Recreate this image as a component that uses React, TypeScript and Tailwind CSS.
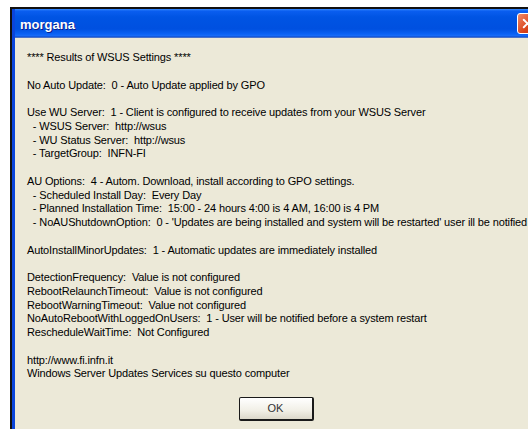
import { X } from "lucide-react";

const lines = [
  "**** Results of WSUS Settings ****",
  "",
  "No Auto Update:  0 - Auto Update applied by GPO",
  "",
  "Use WU Server:  1 - Client is configured to receive updates from your WSUS Server",
  "  - WSUS Server:  http://wsus",
  "  - WU Status Server:  http://wsus",
  "  - TargetGroup:  INFN-FI",
  "",
  "AU Options:  4 - Autom. Download, install according to GPO settings.",
  "  - Scheduled Install Day:  Every Day",
  "  - Planned Installation Time:  15:00 - 24 hours 4:00 is 4 AM, 16:00 is 4 PM",
  "  - NoAUShutdownOption:  0 - 'Updates are being installed and system will be restarted' user ill be notified",
  "",
  "AutoInstallMinorUpdates:  1 - Automatic updates are immediately installed",
  "",
  "DetectionFrequency:  Value is not configured",
  "RebootRelaunchTimeout:  Value is not configured",
  "RebootWarningTimeout:  Value not configured",
  "NoAutoRebootWithLoggedOnUsers:  1 - User will be notified before a system restart",
  "RescheduleWaitTime:  Not Configured",
  "",
  "http://www.fi.infn.it",
  "Windows Server Updates Services su questo computer",
];

function TitleBar() {
  return (
    <div className="flex h-[28px] items-center justify-between bg-[linear-gradient(to_bottom,#3a8cff_0px,#0a5ef0_2px,#0054e3_8px,#0050e0_20px,#0a62f5_25px,#1a6df8_27px,#0b47c8_28px)] pl-[5px]">
      <span className="pt-[3px] font-['Liberation_Sans',sans-serif] text-[13px] font-bold text-white [text-shadow:1px_1px_#0c1f8c]">
        morgana
      </span>
      <div className="mr-[4px] flex h-[21px] w-[21px] items-center justify-center rounded-[3px] border border-white bg-[linear-gradient(135deg,#f08a68,#d9431a_60%,#c2350f)]">
        <X size={15} strokeWidth={3} className="text-white" />
      </div>
    </div>
  );
}

export default function App() {
  return (
    <div className="h-[429px] w-[528px] overflow-hidden bg-white pl-[10px] pt-[7px]">
      <div className="w-[540px] border-l-2 border-t-2 border-[#111]">
        <div className="w-[530px] border-l-[3px] border-[#0a45dc] bg-[#0a45dc]">
          <TitleBar />
          <div className="border-t border-[#4a72c8] bg-[#ece9d8] pb-[20px] pl-[12px] pt-[13px]">
            <div className="whitespace-pre font-['Liberation_Sans',sans-serif] text-[11px] leading-[13.8px] tracking-[-0.13px] text-black">
              {lines.map((line, i) => (
                <div key={i} className="h-[13.75px]">
                  {line}
                </div>
              ))}
            </div>
            <div className="mt-[16px] flex justify-center pr-[17px]">
              <button className="h-[24px] w-[75px] rounded-[2px] border-b-2 border-l border-r-2 border-t border-[#1a1a1a] bg-[linear-gradient(to_bottom,#ffffff,#f1efe6_60%,#dcd8ca)] font-['Liberation_Sans',sans-serif] text-[11px] text-[#333]">
                OK
              </button>
            </div>
          </div>
        </div>
      </div>
    </div>
  );
}
